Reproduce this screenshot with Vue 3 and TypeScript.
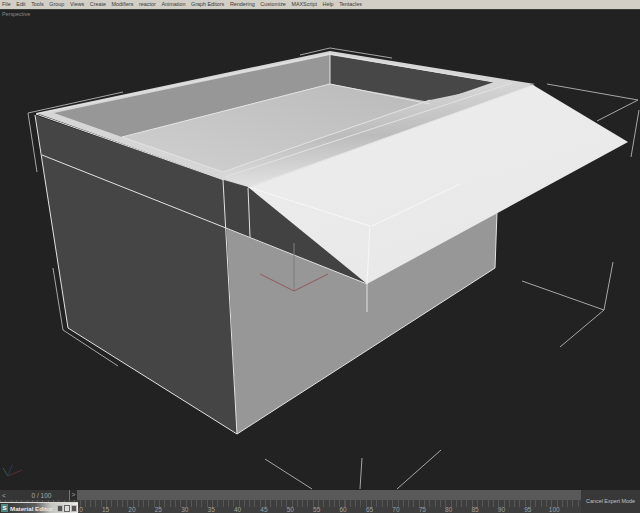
<script setup lang="ts">
const menus: string[] = ['File','Edit','Tools','Group','Views','Create','Modifiers','reactor','Animation','Graph Editors','Rendering','Customize','MAXScript','Help','Tentacles']
const labels: number[] = [10,15,20,25,30,35,40,45,50,55,60,65,70,75,80,85,90,95,100]
const wires: string[] = [
  '28,113 123,92','28,113 37,172','300,55 330,48 392,58','547,84 638,100','638,100 597,121','639,110 631,157',
  '522,281 604,310 613,262','604,310 560,347','265,459 312,489','362,458 360,489','441,450 397,489','53,268 63,330 118,366'
]
const edges: string[] = [
  '36,114 330,54','330,54 494,82','36,114 224,180','42,155 367,284','35,115 68,328 237,434','223,180 237,434','248,188 250,237',
  '237,434 495,268','495,268 497,212','122,137 330,84','330,54 330,84','330,84 430,104','223,172 430,100','225,177 512,83','250,187 533,85',
  '367,284 367,312','122,137 223,172'
]
const lidEdges: string[] = ['248,187 370,226','370,226 367,284','372,226 460,184']
</script>

<template>
  <div class="app">
    <nav class="menu">
      <span v-for="m in menus" :key="m">{{ m }}</span>
    </nav>
    <main class="viewport">
      <span class="label">Perspective</span>
      <svg class="scene" viewBox="0 0 640 480" width="640" height="480" aria-hidden="true">
        <defs>
          <linearGradient id="lid" x1="0" y1="0" x2="0.6" y2="1">
            <stop offset="0" stop-color="#dcdcdc" />
            <stop offset="0.25" stop-color="#ececec" />
            <stop offset="1" stop-color="#e8e8e8" />
          </linearGradient>
          <linearGradient id="floor" x1="0" y1="1" x2="1" y2="0">
            <stop offset="0" stop-color="#d0d0d0" />
            <stop offset="1" stop-color="#bababa" />
          </linearGradient>
          <linearGradient id="hinge" x1="0.45" y1="0" x2="0.55" y2="1">
            <stop offset="0" stop-color="#d8d8d8" />
            <stop offset="0.5" stop-color="#bcbcbc" />
            <stop offset="1" stop-color="#e6e6e6" />
          </linearGradient>
        </defs>
        <g transform="translate(0 -10)">
          <!-- left outer wall -->
          <polygon points="35,115 224,180 237,434 68,328" fill="#454545" />
          <!-- front wall -->
          <polygon points="224,180 366,284 497,212 495,268 237,434" fill="#979797" />
          <!-- dark notch under the lid -->
          <polygon points="222,178 248,187 367,284 225,228" fill="#424242" />
          <!-- rim -->
          <polygon points="36,113 330,51 535,84 500,90 248,187 224,180" fill="#d6d6d6" />
          <!-- inner walls -->
          <polygon points="54,113 330,55 330,84 122,137" fill="#979797" />
          <polygon points="330,55 494,82 430,104 330,84" fill="#474747" />
          <!-- floor -->
          <polygon points="122,137 330,84 430,102 223,172" fill="url(#floor)" />
          <!-- hinge + lid -->
          <polygon points="223,172 430,100 512,83 535,85 250,187 225,179" fill="url(#hinge)" />
          <polygon points="248,187 533,85 628,142 367,284" fill="url(#lid)" />
          <polyline v-for="(e, i) in edges" :key="'e' + i" :points="e" fill="none" stroke="#e2e2e2" stroke-width="1" />
          <polyline v-for="(l, i) in lidEdges" :key="'l' + i" :points="l" fill="none" stroke="#f7f7f7" stroke-width="1" />
          <polyline v-for="(w, i) in wires" :key="'w' + i" :points="w" fill="none" stroke="#a6a6a6" stroke-width="1" />
          <!-- origin gizmo -->
          <polyline points="294,243 294,291" fill="none" stroke="#7d7d7d" />
          <polyline points="260,274 294,291 328,274" fill="none" stroke="#8f5a5a" />
          <g fill="none" stroke-width="1">
            <line x1="8" y1="476" x2="3" y2="468" stroke="#2f5f3f" />
            <line x1="8" y1="476" x2="22" y2="470" stroke="#5a2e2e" />
            <line x1="8" y1="476" x2="12" y2="465" stroke="#2c3560" />
          </g>
        </g>
      </svg>
    </main>
    <footer class="bottom">
      <div class="tracks">
        <div class="slider">
          <div class="thumb"><i class="arrow">&lt;</i><span class="pos">0 / 100</span><i class="next">&gt;</i></div>
          <div class="rail"></div>
        </div>
        <div class="ruler">
          <span v-for="n in labels" :key="n" class="tick">{{ n }}</span>
        </div>
      </div>
      <div class="expert">Cancel Expert Mode</div>
      <div class="task">
        <b class="task-icon">S</b>
        <span class="task-title">Material Editor</span>
        <i class="ctl"></i><i class="ctl light"></i><i class="ctl"></i>
      </div>
    </footer>
  </div>
</template>

<style scoped>
.app {
  width: 640px;
  height: 513px;
  display: flex;
  flex-direction: column;
  overflow: hidden;
  font-family: "Liberation Sans", Arial, sans-serif;
  background: #222;
}
.menu {
  height: 9px;
  flex: none;
  display: flex;
  align-items: center;
  gap: 5.6px;
  padding-left: 2px;
  background: #d2cfc6;
  color: #3a3a38;
  font-size: 5.4px;
  line-height: 9px;
  white-space: nowrap;
}
.viewport {
  position: relative;
  flex: 1;
  min-height: 0;
  background: #222;
  border-top: 1px solid #3a3a3a;
}
.scene {
  display: block;
}
.label {
  position: absolute;
  left: 2px;
  top: 1px;
  font-size: 5.4px;
  color: #8a8a8a;
}
.bottom {
  position: relative;
  flex: none;
  height: 23px;
  display: flex;
  background: #3a3a3a;
}
.tracks {
  width: 581px;
  display: flex;
  flex-direction: column;
}
.slider {
  height: 10px;
  display: flex;
  background: #5a5a5a;
}
.thumb {
  width: 77px;
  display: flex;
  align-items: center;
  background: #353535;
  color: #a8a8a8;
  font-size: 6.5px;
}
.arrow {
  width: 8px;
  font-style: normal;
  text-align: center;
}
.pos {
  flex: 1;
  text-align: center;
  padding-left: 6px;
}
.next {
  width: 8px;
  height: 100%;
  font-style: normal;
  text-align: center;
  line-height: 10px;
  background: #2a2a2a;
  border-left: 1px solid #777;
  box-sizing: border-box;
}
.rail {
  flex: 1;
  background: #595959;
}
.ruler {
  flex: 1;
  display: flex;
  padding-left: 66px;
  background:
    repeating-linear-gradient(90deg, #555 0 1px, transparent 1px 5.3px) 0 0 / 100% 7px no-repeat,
    #3e3e3e;
}
.tick {
  flex: none;
  width: 26.4px;
  text-align: center;
  font-size: 6.5px;
  line-height: 19px;
  height: 13px;
  color: #a0a0a0;
}
.expert {
  flex: 1;
  padding-top: 8px;
  text-align: center;
  font-size: 5.4px;
  color: #c0c0c0;
  background: #383838;
  white-space: nowrap;
}
.task {
  position: absolute;
  left: 0;
  bottom: 0;
  width: 78px;
  height: 11px;
  box-sizing: border-box;
  display: flex;
  align-items: center;
  gap: 1px;
  padding: 0 1px;
  border-top: 1px solid #d8d8d4;
  background: linear-gradient(90deg, #2f3030 0, #5c5c5c 45%, #c4c4c0 65%, #ecece8 100%);
  font-size: 6.2px;
  color: #e8e8e8;
}
.task-icon {
  width: 7px;
  height: 8px;
  background: #4f8a80;
  color: #fff;
  font-size: 6px;
  line-height: 8px;
  text-align: center;
}
.task-title {
  flex: 1;
  font-weight: 700;
  white-space: nowrap;
  padding-left: 1px;
}
.ctl {
  flex: none;
  box-sizing: border-box;
  width: 6px;
  height: 7px;
  background: #555;
  border: 1px solid #bbb;
}
.ctl.light {
  background: #dcdcdc;
  border-color: #666;
}
</style>
